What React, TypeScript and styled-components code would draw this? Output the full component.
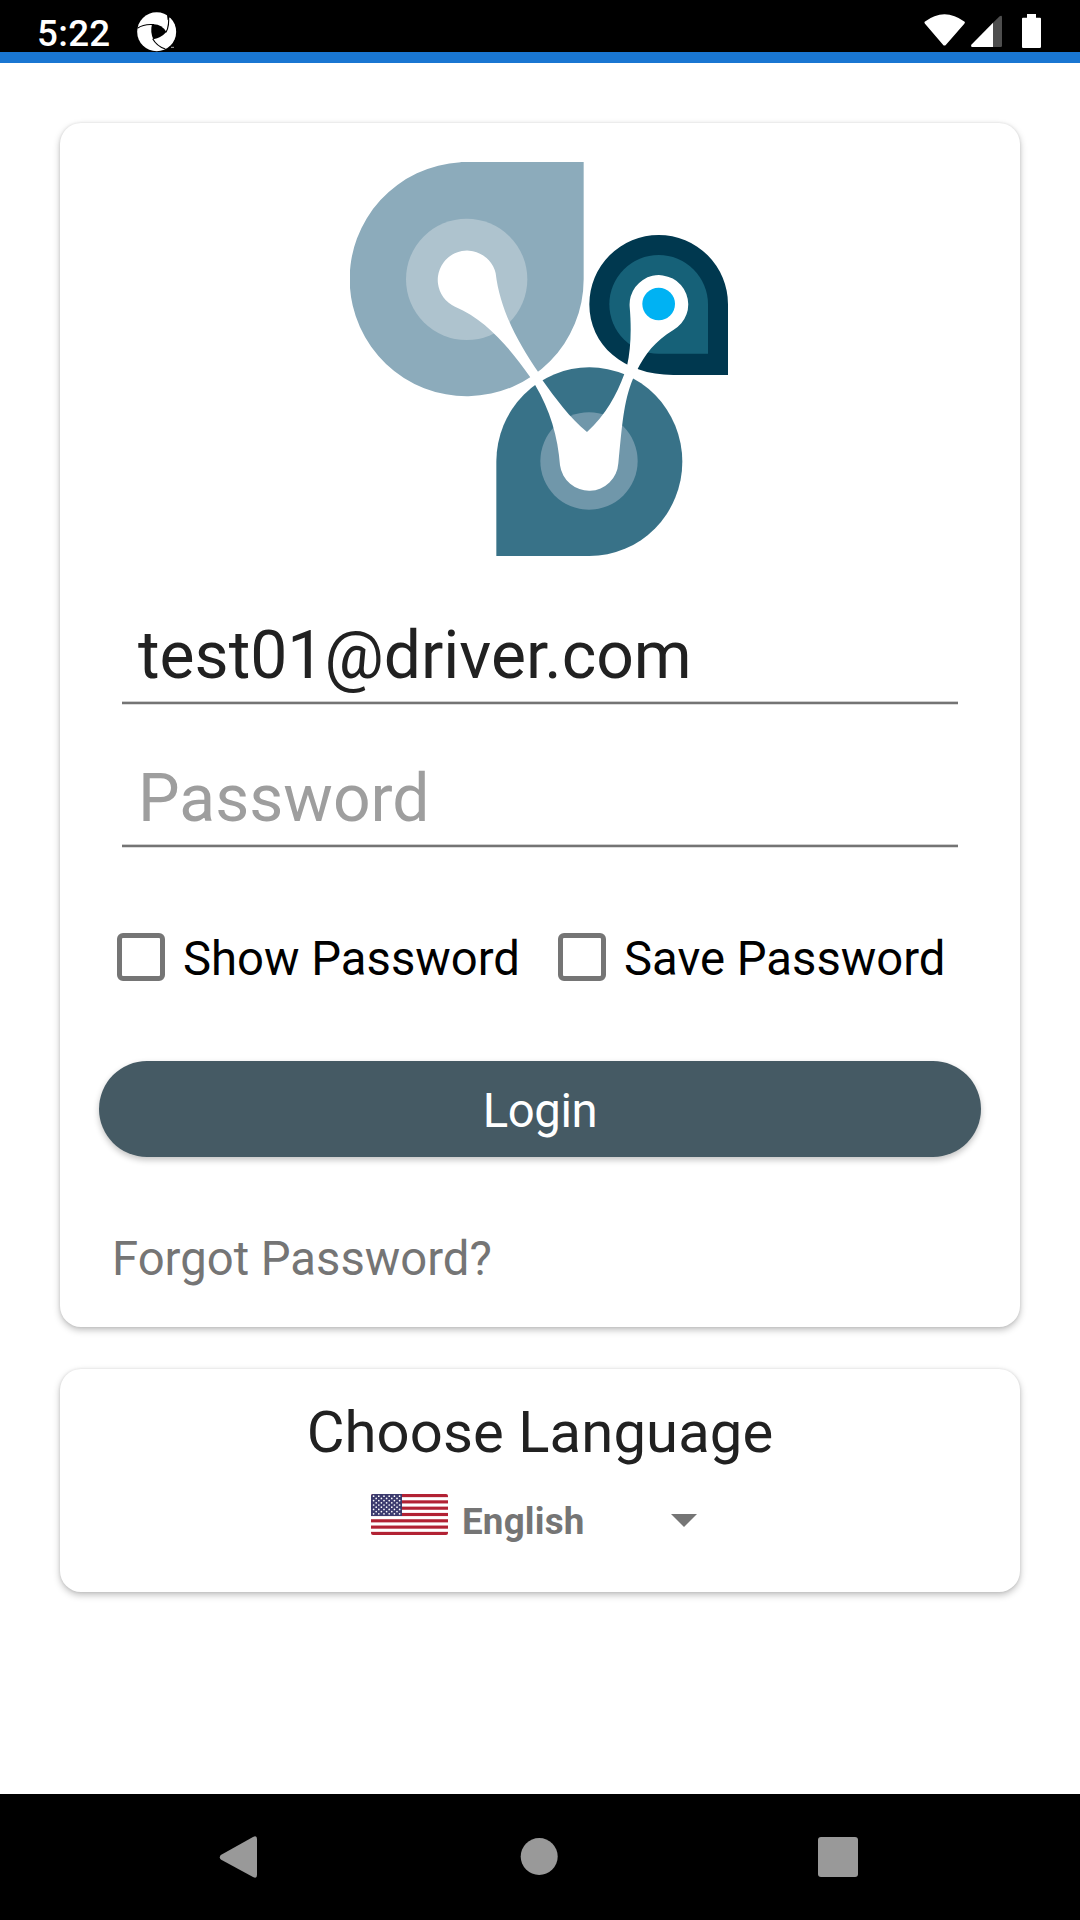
import React from "react";
import styled, { createGlobalStyle } from "styled-components";

const Global = createGlobalStyle`
  * { box-sizing: border-box; }
  body { margin: 0; background: #fff; }
`;

const Screen = styled.div`
  width: 1080px;
  height: 1920px;
  display: flex;
  flex-direction: column;
  background: #fff;
  font-family: Roboto, "Liberation Sans", sans-serif;
  overflow: hidden;
`;

const StatusBar = styled.header`
  height: 63px;
  flex: none;
  display: flex;
  align-items: flex-start;
  padding: 0 39px 0 37px;
  background: #000;
  border-bottom: 11px solid #1976d2;
`;

const Clock = styled.span`
  width: 100px;
  margin-top: 12px;
  color: #fff;
  font-size: 36.75px;
  font-weight: 500;
  line-height: 44px;
  letter-spacing: 0.3px;
`;

const StatusIcons = styled.div`
  margin-left: auto;
  display: flex;
`;

const Main = styled.main`
  flex: 1;
  display: flex;
  flex-direction: column;
  gap: 42px;
  padding: 60px 60px 0;
`;

const Card = styled.section<{ $height: number }>`
  height: ${(p) => p.$height}px;
  display: flex;
  flex-direction: column;
  padding: 39px;
  border-radius: 21px;
  background: #fff;
  box-shadow: 0 3px 7px rgba(0, 0, 0, 0.25), 0 0 3px rgba(0, 0, 0, 0.1);
`;

const LanguageCard = styled(Card)`
  padding: 28px 0 0;
  align-items: center;
`;

const Logo = styled.svg`
  display: block;
  margin: 0 0 54px 251px;
  flex: none;
`;

const Field = styled.div<{ $hint?: boolean }>`
  height: 95px;
  flex: none;
  margin: 0 23px 48px;
  padding: 0 16px 3px;
  display: flex;
  align-items: center;
  font-size: 66px;
  line-height: 78px;
  white-space: nowrap;
  color: ${(p) => (p.$hint ? "#9e9e9e" : "#212121")};
  background: linear-gradient(#cecece 0 1px, #747474 1px 3px, #dcdcdc 3px) bottom / 100% 4px no-repeat;
`;

const Checks = styled.div`
  height: 60px;
  flex: none;
  margin-top: 32px;
  display: flex;
  padding-left: 18px;
`;

const Check = styled.label`
  width: 441px;
  flex: none;
  display: flex;
  align-items: center;
  color: #000;
  font-size: 47.25px;
  line-height: 56px;
  white-space: nowrap;
`;

const CheckText = styled.span`
  padding-top: 2px;
`;

const Box = styled.span`
  width: 48px;
  height: 48px;
  flex: none;
  margin: 0 18px 2px 0;
  border: 5.5px solid #757575;
  border-radius: 6px;
`;

const Button = styled.button`
  height: 96px;
  flex: none;
  margin-top: 73px;
  padding: 4px 0 0;
  border: 0;
  border-radius: 48px;
  background: #455a64;
  color: #fff;
  font: 400 47.25px/56px Roboto, sans-serif;
  letter-spacing: -0.4px;
  box-shadow: 0 3px 6px rgba(0, 0, 0, 0.24);
`;

const Forgot = styled.a`
  margin: 72px 0 0 13px;
  color: #757575;
  font-size: 47.25px;
  line-height: 60px;
`;

const Title = styled.h2`
  margin: 0;
  color: #212121;
  font-size: 58px;
  font-weight: 400;
  line-height: 70px;
  letter-spacing: 0.1px;
`;

const Spinner = styled.div`
  width: 340px;
  height: 60px;
  margin-top: 24px;
  display: flex;
  align-items: flex-start;
  padding-left: 1px;
`;

const Flag = styled.svg`
  margin: 3px 14px 0 0;
  flex: none;
`;

const Language = styled.span`
  width: 208.5px;
  padding-top: 1px;
  color: #757575;
  font-size: 36.75px;
  font-weight: 700;
  line-height: 60px;
  letter-spacing: 0.2px;
`;

const Caret = styled.svg`
  margin-top: 23px;
  flex: none;
`;

const NavBar = styled.nav`
  height: 126px;
  flex: none;
  display: flex;
  align-items: center;
  justify-content: space-between;
  padding: 0 221px 0 219px;
  background: #000;
`;

const stars = Array.from({ length: 9 }, (_, r) =>
  Array.from({ length: r % 2 ? 5 : 6 }, (_, c) => ({
    x: 2.6 + c * 5.2 + (r % 2 ? 2.6 : 0),
    y: 2.2 + r * 2.2,
  }))
).flat();

function UsFlag() {
  return (
    <Flag width="77" height="41" viewBox="0 0 77 41">
      <clipPath id="flag">
        <rect width="77" height="41" rx="2" />
      </clipPath>
      <g clipPath="url(#flag)">
        <rect width="77" height="41" fill="#fff" />
        {Array.from({ length: 7 }, (_, i) => (
          <rect key={i} y={(i * 82) / 13} width="77" height={41 / 13} fill="#b22234" />
        ))}
        <rect width="31" height="22" fill="#3c3b6e" />
        {stars.map((s, i) => (
          <circle key={i} cx={s.x} cy={s.y} r="0.85" fill="#fff" />
        ))}
      </g>
    </Flag>
  );
}

function BrandLogo() {
  return (
    <Logo width="378" height="394" viewBox="30 36 1134 1182">
      <path d="M362 36H731V388A351 351 0 1 1 362 37Z" fill="#8cabbb" />
      <circle cx="380" cy="388" r="182" fill="#aec3ce" />
      <path d="M956 675H1164V463A208 208 0 0 0 748 463C748 585 850 675 1000 675Z" fill="#00384f" />
      <path d="M956 611H1104V463A148 148 0 1 0 956 611Z" fill="#166178" />
      <path d="M469 1218V934A279 283 0 1 1 748 1218Z" fill="#387288" />
      <circle cx="747" cy="933" r="146" fill="#7097aa" />
      <path
        d="M467 370C480 480 535 580 595 667L607 690C645 743 690 805 741 846C797 795 830 735 853 672L861 648C872 600 875 540 869 470A88 88 0 1 1 1000 540C945 573 915 613 890 662L879 686C850 755 846 830 835 940A88 88 0 0 1 660 946C654 860 630 780 585 704L572 683C510 595 440 510 345 470A88 88 0 1 1 467 370Z"
        fill="#fff"
      />
      <circle cx="956" cy="462" r="49" fill="#00b2f3" />
    </Logo>
  );
}

export default function App() {
  return (
    <>
      <Global />
      <Screen>
        <StatusBar>
          <Clock>5:22</Clock>
          <svg width="40" height="52" viewBox="411 0 120 156">
            <circle cx="470" cy="95" r="58.5" fill="#fff" />
            <g fill="none" stroke="#000" strokeWidth="3.4">
              <path d="M412 85Q432 71 462 74" />
              <path d="M498 97Q509 77 505 44" />
              <path d="M458 116Q470 138 496 147" />
            </g>
            <path d="M456 73Q484 70 499 96Q484 113 460 118Q450 96 456 73Z" fill="#000" />
            <path d="M500 35L514 54L509 52L503 61Z" fill="#000" />
            <path d="M487 153Q507 151 515 140H535V156H487Z" fill="#000" />
            <path d="M513 142H522" stroke="#fff" strokeWidth="2" />
          </svg>
          <StatusIcons>
            <svg width="117" height="52" viewBox="252 0 351 156">
              <path d="M254 65Q313 20 374 65Q376 67 373 71L318 134Q313 139 309 134L255 71Q252 68 254 65Z" fill="#fff" />
              <path d="M459 68L479 49Q486 45 486 52V137Q486 141 482 141H459Z" fill="#4e4e4e" />
              <path d="M459 68V141H396Q391 139 394 134Z" fill="#fff" />
              <path d="M561 42H588V53H600Q603 53 603 56V140Q603 144 599 144H549Q546 144 546 140V56Q546 53 549 53H561Z" fill="#fff" />
            </svg>
          </StatusIcons>
        </StatusBar>
        <Main>
          <Card $height={1204}>
            <BrandLogo />
            <Field>test01@driver.com</Field>
            <Field $hint>Password</Field>
            <Checks>
              <Check>
                <Box />
                <CheckText>Show Password</CheckText>
              </Check>
              <Check>
                <Box />
                <CheckText>Save Password</CheckText>
              </Check>
            </Checks>
            <Button>Login</Button>
            <Forgot>Forgot Password?</Forgot>
          </Card>
          <LanguageCard $height={223}>
            <Title>Choose Language</Title>
            <Spinner>
              <UsFlag />
              <Language>English</Language>
              <Caret width="26" height="13" viewBox="0 0 26 13">
                <path d="M0 0H26L13 13Z" fill="#757575" />
              </Caret>
            </Spinner>
          </LanguageCard>
        </Main>
        <NavBar>
          <svg width="38" height="42" viewBox="0 0 38 42">
            <path d="M1.8 19L34 1Q38 -1 38 3V39Q38 43 34 41L1.8 23.5Q-.2 21.2 1.8 19Z" fill="#999" />
          </svg>
          <svg width="42" height="38" viewBox="0 0 42 38">
            <circle cx="23.2" cy="18.5" r="18.5" fill="#999" />
          </svg>
          <svg width="42" height="40" viewBox="0 0 42 40">
            <rect x="1" width="40" height="40" rx="3" fill="#999" />
          </svg>
        </NavBar>
      </Screen>
    </>
  );
}
